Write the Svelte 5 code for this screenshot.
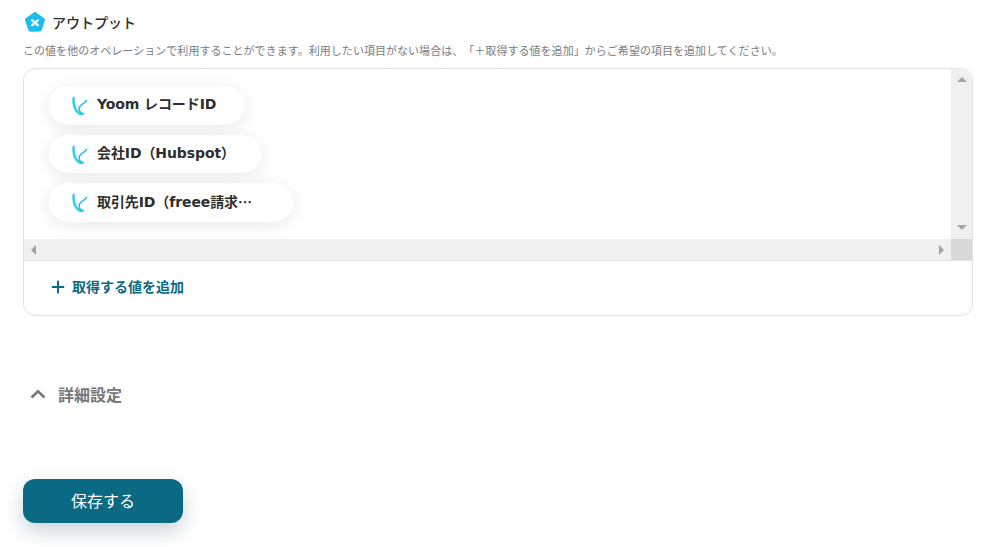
<script>
  const items = [
    { label: 'Yoom レコードID', more: false, w: 196 },
    { label: '会社ID（Hubspot）', more: false, w: 212 },
    { label: '取引先ID（freee請求', more: true, w: 244 }
  ];
</script>

<main class="page">
  <header class="head">
    <svg class="badge" viewBox="0 0 24 24" width="22" height="22" aria-hidden="true">
      <path d="M12 2.600 21.400 9.400 18 20a1.500 1.500 0 0 1-1.400 1H7.400A1.500 1.500 0 0 1 6 20L2.600 9.400Z" fill="#18bdec" stroke="#18bdec" stroke-width="3" stroke-linejoin="round"/>
      <path d="M8.800 10 15.200 15.600M15.200 10 8.800 15.600" stroke="#fff" stroke-width="2.500" stroke-linecap="round"/>
    </svg>
    <h2>アウトプット</h2>
  </header>
  <p class="note">この値を他のオペレーションで利用することができます。利用したい項目がない場合は、「＋取得する値を追加」からご希望の項目を追加してください。</p>

  <section class="box">
    <div class="scroller">
      <div class="content">
        <ul class="list">
          {#each items as item}
            <li class="pill" style="width: {item.w}px">
              <svg class="mark" viewBox="0 0 16 20" width="16" height="20" aria-hidden="true">
                <path d="M14.500 5.500C13 8.500 8.500 9 7.300 12.500 6.700 15 8 17.500 10.500 18.800" fill="none" stroke="#22bfe8" stroke-width="1.600" stroke-linecap="round"/>
                <path d="M1.600 3C1.200 9 3 15.500 7 18.200 9 19.500 10.800 19.300 10.800 18.600" fill="none" stroke="#27d3dc" stroke-width="2.400" stroke-linecap="round"/>
              </svg>
              <span class="label">{item.label}{#if item.more}<span class="more">…</span>{/if}</span>
            </li>
          {/each}
        </ul>
      </div>
      <div class="vbar">
        <span class="arrow up"></span>
        <span class="arrow down"></span>
      </div>
      <div class="hbar">
        <span class="arrow left"></span>
        <span class="arrow right"></span>
      </div>
      <div class="corner"></div>
    </div>
    <button class="add" type="button">
      <svg viewBox="0 0 14 14" width="14" height="14" aria-hidden="true">
        <path d="M7 .8v12.400M.8 7h12.400" stroke="#0b6a83" stroke-width="2"/>
      </svg>
      <span>取得する値を追加</span>
    </button>
  </section>

  <button class="details" type="button">
    <svg viewBox="0 0 16 10" width="16" height="10" aria-hidden="true">
      <path d="M1.500 8.500 8 2.200l6.500 6.300" fill="none" stroke="#777" stroke-width="2.600"/>
    </svg>
    <span>詳細設定</span>
  </button>

  <button class="save" type="button"><span class="save-text">保存する</span></button>
</main>

<style>
  :global(body) {
    margin: 0;
    background: #fff;
  }
  .page {
    width: 992px;
    height: 547px;
    box-sizing: border-box;
    padding: 11px 19px 0 23px;
    font-family: "Noto Sans CJK JP", "Noto Sans", sans-serif;
    color: #2e2e2e;
    overflow: hidden;
  }
  .head {
    display: flex;
    align-items: center;
    gap: 6px;
    height: 22px;
    padding-left: 1px;
  }
  .badge {
    flex: none;
  }
  h2 {
    margin: 0;
    font-size: 14px;
    font-weight: 500;
    line-height: 22px;
  }
  .note {
    margin: 8px 0 0;
    font-size: 11px;
    line-height: 18px;
    letter-spacing: 0.04px;
    color: #7b7b7b;
    white-space: nowrap;
    text-spacing-trim: space-all;
  }
  .box {
    box-sizing: border-box;
    height: 248px;
    margin-top: 9px;
    border: 1px solid #e2e2e2;
    border-radius: 12px;
    overflow: hidden;
  }
  .scroller {
    display: grid;
    grid-template-columns: 1fr 21px;
    grid-template-rows: 170px 21px;
    border-bottom: 1px solid #e2e2e2;
  }
  .content {
    overflow: hidden;
  }
  .list {
    list-style: none;
    margin: 0;
    padding: 17px 0 0 25px;
    display: flex;
    flex-direction: column;
    gap: 10px;
  }
  .pill {
    box-sizing: border-box;
    height: 38.5px;
    display: flex;
    align-items: center;
    gap: 9px;
    padding: 0 0 0 23px;
    border-radius: 20px;
    background: #fff;
    box-shadow: 0 3px 18px rgba(0, 0, 0, 0.09);
  }
  .mark {
    flex: none;
  }
  .label {
    white-space: nowrap;
    font-family: "DejaVu Sans", "Noto Sans CJK JP", sans-serif;
    font-size: 14px;
    font-weight: 700;
    line-height: 20px;
    letter-spacing: -0.1px;
    margin-top: -2px;
    color: #2e2e2e;
  }
  .more {
    font-family: "Noto Sans CJK JP", sans-serif;
  }
  .vbar {
    display: flex;
    flex-direction: column;
    justify-content: space-between;
    align-items: center;
    padding: 8px 0 9px;
    background: #f0f0f0;
  }
  .hbar {
    display: flex;
    justify-content: space-between;
    align-items: center;
    padding: 0 7px;
    background: #f0f0f0;
  }
  .corner {
    background: #d9d9d9;
  }
  .arrow {
    width: 0;
    height: 0;
    border-style: solid;
    border-color: transparent;
  }
  .up {
    border-width: 0 5px 5px;
    border-bottom-color: #a3a3a3;
  }
  .down {
    border-width: 5px 5px 0;
    border-top-color: #a3a3a3;
  }
  .left {
    border-width: 5px 5px 5px 0;
    border-right-color: #a3a3a3;
  }
  .right {
    border-width: 5px 0 5px 5px;
    border-left-color: #a3a3a3;
  }
  button {
    border: 0;
    background: none;
    padding: 0;
    font: inherit;
  }
  .add {
    display: flex;
    align-items: center;
    gap: 7px;
    height: 51px;
    padding-left: 27px;
    font-size: 14px;
    font-weight: 700;
    line-height: 20px;
    color: #0b6a83;
  }
  .add span {
    margin-top: -2px;
  }
  .details {
    display: flex;
    align-items: center;
    gap: 12px;
    margin-top: 67px;
    padding-left: 7px;
    height: 22px;
    font-size: 16px;
    font-weight: 700;
    color: #777;
  }
  .save {
    display: block;
    width: 160px;
    height: 44px;
    margin-top: 74px;
    border-radius: 12px;
    background: #0b6a83;
    color: #fff;
    font-size: 16px;
    font-weight: 400;
    box-shadow: 0 8px 20px rgba(11, 60, 80, 0.22);
  }
  .save-text {
    position: relative;
    top: -1px;
  }
</style>
